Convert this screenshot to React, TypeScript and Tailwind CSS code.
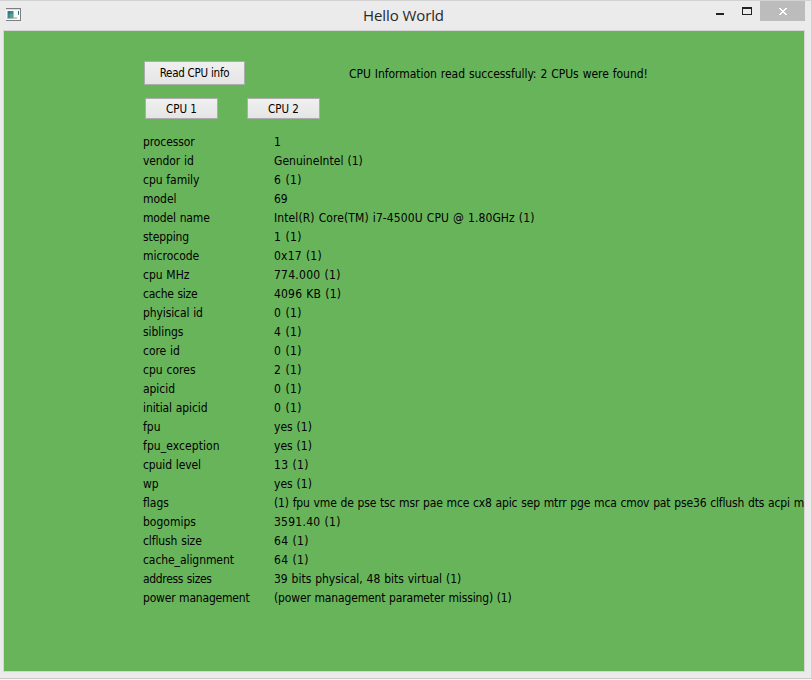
import React from "react";

type Row = { name: string; value: string; nameFit?: string; valueFit?: string };

const rows: Row[] = [
  { name: "processor", value: "1", nameFit: "tracking-[-0.1px]" },
  { name: "vendor id", value: "GenuineIntel (1)", nameFit: "tracking-[-0.1px]", valueFit: "tracking-[0.03px]" },
  { name: "cpu family", value: "6 (1)", nameFit: "tracking-[-0.05px]", valueFit: "tracking-[0.35px]" },
  { name: "model", value: "69" },
  { name: "model name", value: "Intel(R) Core(TM) i7-4500U CPU @ 1.80GHz (1)", nameFit: "tracking-[-0.15px]", valueFit: "tracking-[0.1px]" },
  { name: "stepping", value: "1 (1)", nameFit: "tracking-[-0.1px]", valueFit: "tracking-[0.35px]" },
  { name: "microcode", value: "0x17 (1)", valueFit: "tracking-[0.2px]" },
  { name: "cpu MHz", value: "774.000 (1)", nameFit: "tracking-[-0.05px]", valueFit: "tracking-[0.25px]" },
  { name: "cache size", value: "4096 KB (1)", nameFit: "tracking-[-0.25px]", valueFit: "tracking-[0.18px]" },
  { name: "phyisical id", value: "0 (1)", nameFit: "tracking-[-0.1px]", valueFit: "tracking-[0.35px]" },
  { name: "siblings", value: "4 (1)", nameFit: "tracking-[-0.05px]", valueFit: "tracking-[0.35px]" },
  { name: "core id", value: "0 (1)", nameFit: "tracking-[-0.05px]", valueFit: "tracking-[0.35px]" },
  { name: "cpu cores", value: "2 (1)", valueFit: "tracking-[0.35px]" },
  { name: "apicid", value: "0 (1)", nameFit: "tracking-[-0.05px]", valueFit: "tracking-[0.35px]" },
  { name: "initial apicid", value: "0 (1)", nameFit: "tracking-[-0.1px]", valueFit: "tracking-[0.35px]" },
  { name: "fpu", value: "yes (1)" },
  { name: "fpu_exception", value: "yes (1)", nameFit: "tracking-[0.08px]" },
  { name: "cpuid level", value: "13 (1)", nameFit: "tracking-[-0.1px]", valueFit: "tracking-[0.3px]" },
  { name: "wp", value: "yes (1)" },
  {
    name: "flags",
    value: "(1) fpu vme de pse tsc msr pae mce cx8 apic sep mtrr pge mca cmov pat pse36 clflush dts acpi m",
    valueFit: "tracking-[-0.14px]",
  },
  { name: "bogomips", value: "3591.40 (1)", valueFit: "tracking-[0.25px]" },
  { name: "clflush size", value: "64 (1)", nameFit: "tracking-[-0.1px]", valueFit: "tracking-[0.3px]" },
  { name: "cache_alignment", value: "64 (1)", nameFit: "tracking-[-0.07px]", valueFit: "tracking-[0.3px]" },
  { name: "address sizes", value: "39 bits physical, 48 bits virtual (1)", nameFit: "tracking-[-0.33px]", valueFit: "tracking-[-0.02px]" },
  { name: "power management", value: "(power management parameter missing) (1)", nameFit: "tracking-[-0.2px]", valueFit: "tracking-[-0.15px]" },
];

const buttonClass =
  "box-border border border-[#acacac] bg-linear-to-b from-[#f0f0f0] to-[#e5e5e5] pt-[2px] text-center text-[11.5px] text-black";

function WindowIcon() {
  return (
    <svg width="16" height="14" viewBox="0 0 16 14" shapeRendering="crispEdges">
      <rect x="0" y="0" width="15" height="13" fill="#7c8084" />
      <rect x="0" y="1" width="14" height="11" fill="#fbfbfb" />
      <rect x="0" y="1" width="14" height="1" fill="#d9dde0" />
      <rect x="1" y="3" width="7" height="8" fill="#a9b8c0" />
      <rect x="2" y="3" width="5" height="7" fill="#3b8796" />
      <rect x="2" y="3" width="2" height="3" fill="#3d6f9c" />
      <rect x="4" y="6" width="3" height="4" fill="#58a487" />
      <rect x="12" y="3" width="1" height="3" fill="#2863a4" />
      <rect x="12" y="6" width="1" height="1" fill="#49a35a" />
      <rect x="8" y="9" width="3" height="2" fill="#c9c9c9" />
    </svg>
  );
}

export default function App() {
  return (
    <div className="h-[680px] w-[812px] overflow-hidden bg-[#f7f7f7] font-['DejaVu_Sans_Condensed','DejaVu_Sans',sans-serif] text-black">
      <div className="flex h-[679px] flex-col border-t border-r border-b border-t-[#d2d2d2] border-r-[#d2d2d2] border-b-[#c8c8c8] bg-[#ebebeb]">
        <header className="flex h-[29px] items-start">
          <div className="w-[320px] pt-[7px] pl-[6px]">
            <WindowIcon />
          </div>
          <h1 className="w-[167px] pt-[4px] text-center font-['Open_Sans',sans-serif] text-[15px] leading-[20px] tracking-[-0.1px] text-[#282828]">
            Hello World
          </h1>
          <div className="flex flex-1 justify-end pr-[6px]">
            <div className="mt-[12px] mr-[18px] h-[2px] w-[8px] bg-[#222]" />
            <div className="mt-[6px] mr-[8px] box-border h-[8px] w-[10px] border border-t-2 border-[#222]" />
            <button className="flex h-[20px] w-[45px] items-center justify-center bg-[#bcbcbc]">
              <svg width="8" height="7" viewBox="0 0 8 7" shapeRendering="crispEdges">
                <path d="M0 0h2v1h1v1h2v-1h1v-1h2v1h-1v1h-1v1h-1v1h1v1h1v1h1v1h-2v-1h-1v-1h-2v1h-1v1h-2v-1h1v-1h1v-1h1v-1h-1v-1h-1v-1h-1z" fill="#fff" />
              </svg>
            </button>
          </div>
        </header>
        <main className="ml-[3px] box-border h-[642px] w-[802px] overflow-hidden border border-[#d5d5d5] bg-[#68b45b] pt-[30px]">
          <div className="flex pl-[140px]">
            <button className={buttonClass + " h-[24px] w-[101px] tracking-[-0.25px]"}>Read CPU info</button>
            <p className="ml-[104px] pt-[4px] text-[12px] leading-[19px] tracking-[-0.04px] whitespace-nowrap [word-spacing:0.6px]">
              CPU Information read successfully: 2 CPUs were found!
            </p>
          </div>
          <div className="mt-[13px] flex gap-[29px] pl-[141px]">
            <button className={buttonClass + " h-[21px] w-[73px]"}>CPU 1</button>
            <button className={buttonClass + " h-[21px] w-[73px]"}>CPU 2</button>
          </div>
          <dl className="mt-[14px] pl-[139px]">
            {rows.map((row) => (
              <div key={row.name} className="flex h-[19px] text-[12px] leading-[19px] whitespace-nowrap [word-spacing:0.5px]">
                <dt className={"w-[131px] shrink-0 " + (row.nameFit ?? "")}>{row.name}</dt>
                <dd className={row.valueFit}>{row.value}</dd>
              </div>
            ))}
          </dl>
        </main>
      </div>
    </div>
  );
}
